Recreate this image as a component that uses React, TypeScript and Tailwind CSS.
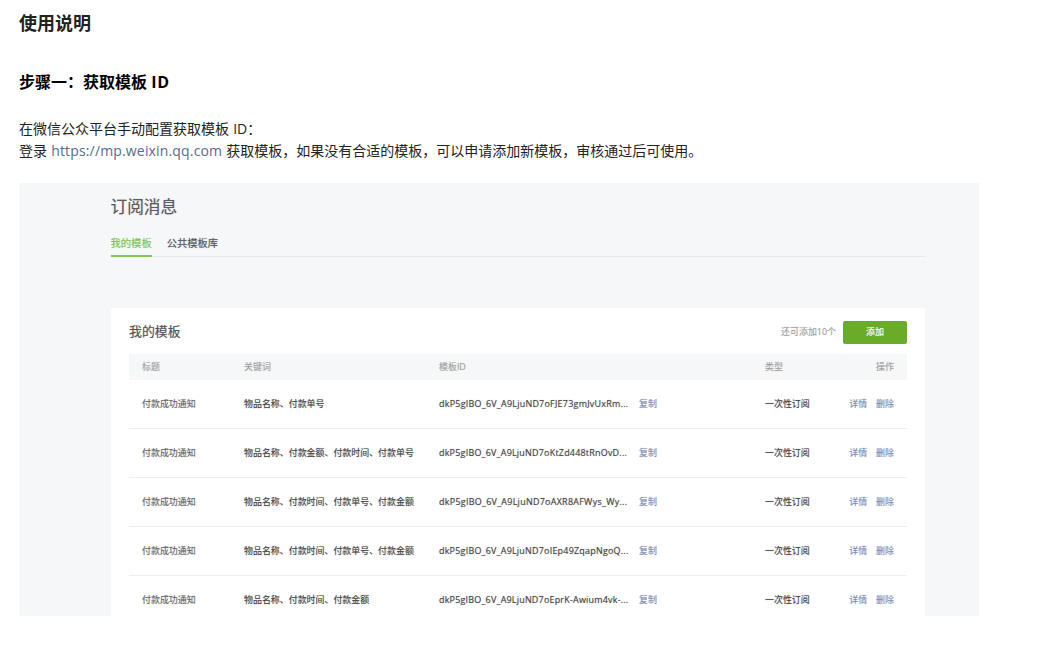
type Template = { keywords: string; id: string; idClass: string };

const templates: Template[] = [
  { keywords: '物品名称、付款单号', id: 'dkP5gIBO_6V_A9LjuND7oFJE73gmJvUxRm...', idClass: 'tracking-[0.25px]' },
  { keywords: '物品名称、付款金额、付款时间、付款单号', id: 'dkP5gIBO_6V_A9LjuND7oKtZd448tRnOvD...', idClass: 'tracking-[0.23px]' },
  { keywords: '物品名称、付款时间、付款单号、付款金额', id: 'dkP5gIBO_6V_A9LjuND7oAXR8AFWys_Wy...', idClass: 'tracking-[0.28px]' },
  { keywords: '物品名称、付款时间、付款单号、付款金额', id: 'dkP5gIBO_6V_A9LjuND7oIEp49ZqapNgoQ...', idClass: 'tracking-[0.23px]' },
  { keywords: '物品名称、付款时间、付款金额', id: 'dkP5gIBO_6V_A9LjuND7oEprK-Awium4vk-...', idClass: 'tracking-[0.22px]' },
];

const columns = 'grid grid-cols-[102px_195px_326px_84px_1fr] items-center pl-[13px] pr-[13px]';

function TemplateRow({ keywords, id, idClass }: Template) {
  return (
    <div className={`${columns} h-[48.9px] shrink-0 border-b border-[#eeeff0] text-[#444]`}>
      <span className="text-[#686868]">付款成功通知</span>
      <span>{keywords}</span>
      <span className="flex items-center">
        <span className={`w-[200px] ${idClass}`}>{id}</span>
        <a className="text-[#818db8]">复制</a>
      </span>
      <span>一次性订阅</span>
      <span className="flex justify-end gap-[9px] text-[#818db8]">
        <a>详情</a>
        <a>删除</a>
      </span>
    </div>
  );
}

function SubscriptionPanel() {
  return (
    <section className="mt-[21px] h-[433px] w-[960px] overflow-hidden bg-[#f6f7f9] pl-[91.5px] pr-[54px] pt-3 [text-shadow:0_0_1px_color-mix(in_srgb,currentColor_50%,transparent)]">
      <h3 className="h-6 text-[16.7px] leading-6 text-[#5c5c5c]">订阅消息</h3>
      <nav className="mt-[14px] flex h-6 gap-[15px] border-b border-[#e7e8ea] text-[10.3px] leading-[21px] text-[#555]">
        <a className="h-6 border-b-2 border-[#83c754] text-[#80c455]">我的模板</a>
        <a>公共模板库</a>
      </nav>
      <div className="mt-[51px] h-[330px] rounded-t-[2px] bg-white pl-[18.5px] pr-[18px] pt-[12px] text-[8.95px] leading-[14px]">
        <div className="flex h-6 items-center">
          <h4 className="mb-0.5 text-[12.9px] text-[#555]">我的模板</h4>
          <span className="ml-auto mr-[7px] text-[#a2a2a2]">还可添加10个</span>
          <button className="h-[23px] w-[64px] rounded-[2px] bg-[#68ac29] text-white [text-shadow:0_0_1px_#ffffffaa]">添加</button>
        </div>
        <div className={`${columns} mt-[10px] h-[25.5px] bg-[#f6f7f9] text-[#a2a2a2]`}>
          <span>标题</span>
          <span>关键词</span>
          <span>模板ID</span>
          <span>类型</span>
          <span className="text-right">操作</span>
        </div>
        <div className="pt-[0.5px]">
          {templates.map((t) => (
            <TemplateRow key={t.id} {...t} />
          ))}
        </div>
      </div>
    </section>
  );
}

export default function App() {
  return (
    <main className="h-[664px] overflow-hidden whitespace-nowrap bg-white pl-[19px] pt-[10px] font-['Open_Sans','Noto_Sans_CJK_SC',sans-serif] text-[#222]">
      <h1 className="h-[26px] text-[18px] font-bold leading-[26px]">使用说明</h1>
      <h2 className="mt-[34px] h-6 text-base font-bold leading-6 text-black">
        步骤一：获取模板 <span className="tracking-[0.8px]">ID</span>
      </h2>
      <p className="mt-6 text-[14px] leading-[22px] [word-spacing:0.5px]">
        在微信公众平台手动配置获取模板 ID：
        <br />
        登录 <a className="tracking-[0.16px] text-[#576b95]">https://mp.weixin.qq.com</a> 获取模板，如果没有合适的模板，可以申请添加新模板，审核通过后可使用。
      </p>
      <SubscriptionPanel />
    </main>
  );
}
